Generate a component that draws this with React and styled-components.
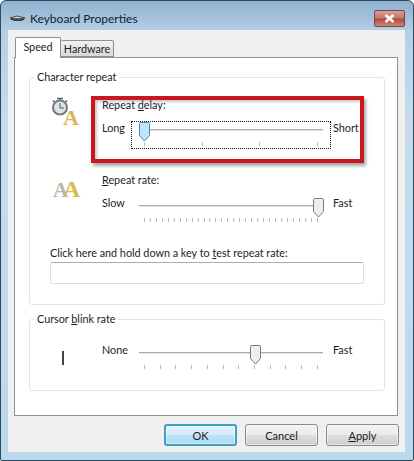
import React from "react";
import styled, { createGlobalStyle } from "styled-components";

const GlobalStyle = createGlobalStyle`
  html, body {
    margin: 0;
    padding: 0;
    background: #fff;
  }
  body {
    font-family: Lato, "Open Sans", "Liberation Sans", sans-serif;
    font-size: 10.8px;
    color: #1c1c1c;
  }
`;

function Thumb({ left, active }) {
  const fill = active ? "#bfe6f8" : "#eeeeee";
  const stroke = active ? "#3d8fb5" : "#77797c";
  return (
    <ThumbIcon $left={left} width="11" height="20" viewBox="0 0 11 20">
      <path
        d="M1.5 .5h8a1 1 0 0 1 1 1v12l-5 5.500-5-5.500v-12a1 1 0 0 1 1-1z"
        fill={fill}
        stroke={stroke}
      />
    </ThumbIcon>
  );
}

function Slider({ ticks, value, active, focused }) {
  return (
    <SliderBox $focused={focused}>
      <Track />
      <Thumb left={value} active={active} />
      <Ticks>
        {Array.from({ length: ticks }).map((_, i) => (
          <Tick key={i} />
        ))}
      </Ticks>
    </SliderBox>
  );
}

function KeyboardIcon() {
  return (
    <svg width="17" height="8" viewBox="0 0 17 8">
      <path d="M1 4 8 2l8 2-3 2.500H5z" fill="#e4e4e4" stroke="#3a3f45" />
      <path d="M2 5h13" stroke="#20252a" strokeWidth="1.500" />
    </svg>
  );
}

function ClockLetterIcon() {
  return (
    <svg width="30" height="34" viewBox="0 0 30 34">
      <path d="M6 1.500h6M9 1.500v3M2 3.500l2 2M16 3.500l-2 2" stroke="#5c6468" strokeWidth="1.500" />
      <circle cx="9" cy="10.500" r="7" fill="#dce6ea" stroke="#6d7c84" strokeWidth="2" />
      <path d="M9 6v5h4" fill="none" stroke="#4c5458" />
      <IconLetter x="12" y="28" fontSize="22" fill="#d8b656">A</IconLetter>
    </svg>
  );
}

function DoubleLetterIcon() {
  return (
    <svg width="30" height="32" viewBox="0 0 30 32">
      <IconLetter x="2" y="25" fontSize="21" fill="#b9b6a9">A</IconLetter>
      <IconLetter x="12" y="25" fontSize="24" fill="#dcb94e">A</IconLetter>
    </svg>
  );
}

export default function App() {
  return (
    <>
      <GlobalStyle />
      <Window>
        <TitleBar>
          <KeyboardIcon />
          <Title>Keyboard Properties</Title>
          <CloseButton>
            <svg width="11" height="9" viewBox="0 0 11 9">
              <path d="M1.500 1l8 7M9.500 1l-8 7" stroke="#fff" strokeWidth="2.400" />
            </svg>
          </CloseButton>
        </TitleBar>
        <Client>
          <TabStrip>
            <Tab $active>Speed</Tab>
            <Tab>Hardware</Tab>
          </TabStrip>
          <Panel>
            <Group>
              <Legend>Character repeat</Legend>
              <SettingRow>
                <IconCell>
                  <ClockLetterIcon />
                </IconCell>
                <Setting>
                  <SettingLabel>
                    Repeat <Key>d</Key>elay:
                  </SettingLabel>
                  <SliderRow>
                    <SideLabel $lift={1}>Long</SideLabel>
                    <Slider ticks={4} value={8} active focused />
                    <EndLabel $lift={1}>Short</EndLabel>
                  </SliderRow>
                </Setting>
              </SettingRow>
              <SettingRow $second>
                <IconCell>
                  <DoubleLetterIcon />
                </IconCell>
                <Setting>
                  <SettingLabel>
                    <Key>R</Key>epeat rate:
                  </SettingLabel>
                  <SliderRow $second>
                    <SideLabel>Slow</SideLabel>
                    <Slider ticks={30} value={182} />
                    <EndLabel>Fast</EndLabel>
                  </SliderRow>
                </Setting>
              </SettingRow>
              <TestLabel>
                Click here and hold down a key to <Key>t</Key>est repeat rate:
              </TestLabel>
              <TestInput />
            </Group>
            <BlinkGroup>
              <Legend>
                Cursor <Key>b</Key>link rate
              </Legend>
              <SettingRow>
                <IconCell>
                  <CursorMark />
                </IconCell>
                <SliderRow $flush>
                  <SideLabel>None</SideLabel>
                  <Slider ticks={12} value={119} />
                  <EndLabel>Fast</EndLabel>
                </SliderRow>
              </SettingRow>
            </BlinkGroup>
            <Highlight />
          </Panel>
          <Footer>
            <Button $primary>OK</Button>
            <Button>Cancel</Button>
            <Button>
              <Key>A</Key>pply
            </Button>
          </Footer>
        </Client>
      </Window>
    </>
  );
}

const Window = styled.div`
  box-sizing: border-box;
  width: 414px;
  height: 461px;
  display: flex;
  flex-direction: column;
  border: 1px solid #2c4a5e;
  border-radius: 6px 6px 2px 2px;
  background: linear-gradient(180deg, #8fb0d0 0, #b6cfe5 30px, #c6dcee 120px, #bcd8ec 100%);
`;

const TitleBar = styled.div`
  box-sizing: border-box;
  height: 29px;
  flex: none;
  display: flex;
  align-items: center;
  padding: 5px 8px 0;
  gap: 4px;
`;

const Title = styled.div`
  flex: 1;
  font-size: 12px;
  color: #14202c;
`;

const CloseButton = styled.div`
  box-sizing: border-box;
  width: 31px;
  height: 17px;
  display: flex;
  align-items: center;
  justify-content: center;
  border: 1px solid #6a4a4a;
  border-radius: 2px;
  background: linear-gradient(180deg, #d9a196 0, #c8776a 45%, #b5483a 55%, #cc8a78 100%);
`;

const Client = styled.div`
  flex: 1;
  margin: 0 8px 8px 7px;
  padding: 7px 7px 0 6px;
  background: #f0f0f0;
  display: flex;
  flex-direction: column;
`;

const TabStrip = styled.div`
  display: flex;
  align-items: flex-end;
  height: 20px;
  padding-left: 1px;
  position: relative;
  z-index: 1;
`;

const Tab = styled.div`
  box-sizing: border-box;
  width: ${({ $active }) => ($active ? "46px" : "53px")};
  height: ${({ $active }) => ($active ? "21px" : "17px")};
  margin-bottom: ${({ $active }) => ($active ? "-1px" : "0")};
  padding-top: ${({ $active }) => ($active ? "1px" : "0")};
  text-align: center;
  border: 1px solid #8b9097;
  border-bottom: ${({ $active }) => ($active ? "0" : "1px solid #8b9097")};
  border-left: ${({ $active }) => ($active ? "1px solid #8b9097" : "0")};
  background: ${({ $active }) =>
    $active ? "#fff" : "linear-gradient(180deg, #f2f2f2, #d8d8d8)"};
  line-height: 15px;
  border-radius: 2px 2px 0 0;
`;

const Panel = styled.div`
  position: relative;
  box-sizing: border-box;
  height: 359px;
  border: 1px solid #8b9097;
  background: #fff;
  padding: 11px 12px 0 14px;
`;

const Group = styled.fieldset`
  margin: 0;
  min-width: 0;
  padding: 12px 20px 20px 20px;
  border: 1px solid #dfe4e8;
  border-radius: 3px;
`;

const BlinkGroup = styled(Group)`
  margin-top: 6px;
  padding: 17px 20px 18px 20px;
`;

const Legend = styled.legend`
  margin-left: -16px;
  padding: 0 3px;
  line-height: 16px;
`;

const SettingRow = styled.div`
  display: flex;
  margin-top: ${({ $second }) => ($second ? "23px" : "0")};
`;

const IconCell = styled.div`
  width: 51px;
  height: 0;
  flex: none;
  margin-left: 1px;
`;

const IconLetter = styled.text`
  font-family: "Liberation Serif", serif;
  font-weight: bold;
`;

const CursorMark = styled.div`
  width: 2px;
  height: 14px;
  margin: 7px 0 0 11px;
  background: #444;
`;

const Setting = styled.div`
  display: flex;
  flex-direction: column;
`;

const SettingLabel = styled.div`
  line-height: 16px;
`;

const SliderRow = styled.div`
  display: flex;
  align-items: flex-start;
  margin-top: ${({ $second, $flush }) => ($flush ? "0" : $second ? "9px" : "8px")};
`;

const SideLabel = styled.div`
  width: 29px;
  line-height: 16px;
  margin-top: ${({ $lift }) => ($lift ? `-${$lift}px` : "-2px")};
`;

const EndLabel = styled(SideLabel)`
  width: auto;
  margin-left: 2px;
`;

const SliderBox = styled.div`
  position: relative;
  box-sizing: border-box;
  width: 200px;
  height: 28px;
  outline: ${({ $focused }) => ($focused ? "1px dotted #111" : "none")};
  outline-offset: -1px;
`;

const Track = styled.div`
  position: absolute;
  left: 8px;
  right: 8px;
  top: 8px;
  height: 1px;
  background: #a9acae;
  border-bottom: 1px solid #e3e3e3;
`;

const ThumbIcon = styled.svg`
  position: absolute;
  top: 1px;
  left: ${({ $left }) => $left}px;
`;

const Ticks = styled.div`
  position: absolute;
  left: 13px;
  right: 13px;
  top: 21px;
  display: flex;
  justify-content: space-between;
`;

const Tick = styled.span`
  width: 1px;
  height: 4px;
  background: #bdbdbd;
`;

const TestLabel = styled.div`
  margin-top: 20px;
  line-height: 16px;
`;

const TestInput = styled.div`
  box-sizing: border-box;
  height: 22px;
  margin-top: 1px;
  width: 314px;
  border: 1px solid #dadfe3;
  border-top-color: #abadb3;
  border-radius: 2px;
  background: #fff;
`;

const Highlight = styled.div`
  position: absolute;
  box-sizing: border-box;
  left: 76px;
  top: 38px;
  width: 273px;
  height: 67px;
  border: 4px solid #c9161f;
  box-shadow: 2px 3px 3px rgba(90, 100, 110, 0.55), inset 2px 2px 3px rgba(90, 100, 110, 0.35);
  pointer-events: none;
`;

const Footer = styled.div`
  display: flex;
  justify-content: flex-end;
  gap: 8px;
  margin: 8px -1px 0 0;
`;

const Button = styled.div`
  box-sizing: border-box;
  width: 73px;
  height: 22px;
  display: flex;
  align-items: center;
  justify-content: center;
  font-size: 11px;
  border: ${({ $primary }) => ($primary ? "2px solid #3f9fc4" : "1px solid #8a8a8a")};
  border-radius: 3px;
  background: ${({ $primary }) =>
    $primary
      ? "linear-gradient(180deg, #e4f3fb 0, #d2ecfa 50%, #bce3f8 52%, #abd9f2 100%)"
      : "linear-gradient(180deg, #f2f2f2 0, #ebebeb 50%, #dddddd 52%, #cfcfcf 100%)"};
  box-shadow: inset 0 0 0 1px rgba(255, 255, 255, 0.5);
`;

const Key = styled.span`
  text-decoration: underline;
`;
